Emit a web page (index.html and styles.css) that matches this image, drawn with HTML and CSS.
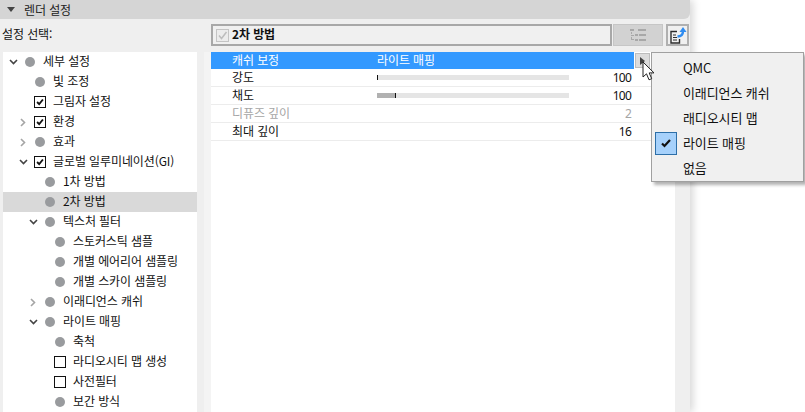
FILE: index.html
```html
<!DOCTYPE html>
<html lang="ko">
<head>
<meta charset="utf-8">
<title>렌더 설정</title>
<link rel="stylesheet" href="styles.css">
</head>
<body>
<div class="panel">
  <header class="head"><span class="tri"></span><span class="head-text">렌더 설정</span></header>
  <div class="toolbar">
    <div class="pick-label">설정 선택:</div>
    <div class="field">
      <span class="check-dis"><svg width="11" height="11" viewBox="0 0 11 11"><path d="M2 5.500l2.500 3L9.500 2" fill="none" stroke="#bdbdbd" stroke-width="1.500"/></svg></span>
      <b>2차 방법</b>
    </div>
    <div class="btn-list">
      <svg width="16" height="12" viewBox="0 0 16 12"><g fill="#a8a8a8"><rect x="0" y="0" width="4" height="2"/><rect x="5" y="5" width="3" height="2"/><rect x="5" y="10" width="3" height="2"/><rect x="8" y="0" width="8" height="2"/><rect x="9" y="5" width="7" height="2"/><rect x="9" y="10" width="7" height="2"/><rect x="1" y="3" width="1" height="2"/><rect x="1" y="6" width="3" height="1"/><rect x="1" y="8" width="1" height="3"/><rect x="2" y="10" width="2" height="1"/></g></svg>
    </div>
    <div class="btn-export">
      <svg width="18" height="18" viewBox="0 0 18 18"><path d="M8 5.500H2V17h8.500v-4" fill="none" stroke="#2b2b2b" stroke-width="1.400"/><path d="M4 9h3M4 11.500h4M4 14h4" stroke="#2b2b2b" stroke-width="1.200"/><path d="M8.500 10.500c3.500 0 5.500-1.500 5.500-5.500" fill="none" stroke="#2f8cf0" stroke-width="2.400"/><path d="M10.500 6l3.500-5 3.500 5z" fill="#2f8cf0"/></svg>
    </div>
  </div>
  <div class="main">
    <ul class="tree">
      <li class="row"><span class="arrow"><svg class="chev" viewBox="0 0 9 6"><path d="M1 1l3.500 3.500L8 1"/></svg></span><span class="dot"></span><span class="t">세부 설정</span></li>
      <li class="row d1"><span class="arrow"></span><span class="dot"></span><span class="t">빛 조정</span></li>
      <li class="row d1"><span class="arrow"></span><span class="box on"><svg viewBox="0 0 12 12"><path d="M2.500 6l2.500 2.500 4.500-5.500"/></svg></span><span class="t">그림자 설정</span></li>
      <li class="row d1"><span class="arrow"><svg class="side" viewBox="0 0 6 9"><path d="M1 1l3.500 3.500L1 8"/></svg></span><span class="box on"><svg viewBox="0 0 12 12"><path d="M2.500 6l2.500 2.500 4.500-5.500"/></svg></span><span class="t">환경</span></li>
      <li class="row d1"><span class="arrow"><svg class="side" viewBox="0 0 6 9"><path d="M1 1l3.500 3.500L1 8"/></svg></span><span class="dot"></span><span class="t">효과</span></li>
      <li class="row d1"><span class="arrow"><svg class="chev" viewBox="0 0 9 6"><path d="M1 1l3.500 3.500L8 1"/></svg></span><span class="box on"><svg viewBox="0 0 12 12"><path d="M2.500 6l2.500 2.500 4.500-5.500"/></svg></span><span class="t">글로벌 일루미네이션(GI)</span></li>
      <li class="row d2"><span class="arrow"></span><span class="dot"></span><span class="t">1차 방법</span></li>
      <li class="row d2 sel"><span class="arrow"></span><span class="dot"></span><span class="t">2차 방법</span></li>
      <li class="row d2"><span class="arrow"><svg class="chev" viewBox="0 0 9 6"><path d="M1 1l3.500 3.500L8 1"/></svg></span><span class="dot"></span><span class="t">텍스처 필터</span></li>
      <li class="row d3"><span class="arrow"></span><span class="dot"></span><span class="t">스토커스틱 샘플</span></li>
      <li class="row d3"><span class="arrow"></span><span class="dot"></span><span class="t">개별 에어리어 샘플링</span></li>
      <li class="row d3"><span class="arrow"></span><span class="dot"></span><span class="t">개별 스카이 샘플링</span></li>
      <li class="row d2"><span class="arrow"><svg class="side" viewBox="0 0 6 9"><path d="M1 1l3.500 3.500L1 8"/></svg></span><span class="dot"></span><span class="t">이래디언스 캐쉬</span></li>
      <li class="row d2"><span class="arrow"><svg class="chev" viewBox="0 0 9 6"><path d="M1 1l3.500 3.500L8 1"/></svg></span><span class="dot"></span><span class="t">라이트 매핑</span></li>
      <li class="row d3"><span class="arrow"></span><span class="dot"></span><span class="t">축척</span></li>
      <li class="row d3"><span class="arrow"></span><span class="box"></span><span class="t">라디오시티 맵 생성</span></li>
      <li class="row d3"><span class="arrow"></span><span class="box"></span><span class="t">사전필터</span></li>
      <li class="row d3"><span class="arrow"></span><span class="dot"></span><span class="t">보간 방식</span></li>
    </ul>
    <div class="gutter"></div>
    <div class="table">
      <div class="tr head-row"><span class="name">캐쉬 보정</span><span class="val">라이트 매핑</span><span class="more"><span class="more-tri"></span></span></div>
      <div class="tr"><span class="name">강도</span><span class="slider"><i class="tick"></i></span><span class="num">100</span></div>
      <div class="tr"><span class="name">채도</span><span class="slider"><i class="fill"></i><i class="tick"></i></span><span class="num">100</span></div>
      <div class="tr off"><span class="name">디퓨즈 깊이</span><span class="slider none"></span><span class="num">2</span></div>
      <div class="tr"><span class="name">최대 깊이</span><span class="slider none"></span><span class="num">16</span></div>
    </div>
  </div>
</div>
<ul class="menu">
  <li>QMC</li>
  <li>이래디언스 캐쉬</li>
  <li>래디오시티 맵</li>
  <li class="checked"><span class="mark"><svg width="10" height="9" viewBox="0 0 10 9"><path d="M1 4.500l2.500 2.500L9 1" fill="none" stroke="#111" stroke-width="2.200"/></svg></span>라이트 매핑</li>
  <li>없음</li>
</ul>
<svg class="cursor" width="14" height="20" viewBox="0 0 14 20"><path d="M1 1v15l3.500-3.200 2.500 6 2.700-1.100-2.500-5.800H12z" fill="#fff" stroke="#222" stroke-width="1"/></svg>
</body>
</html>
```
FILE: styles.css
```css
* { box-sizing: border-box; }
html, body { margin: 0; padding: 0; height: 412px; overflow: hidden; background: #fff; }
body {
  position: relative;
  font-family: "Noto Sans CJK KR", "Noto Sans", sans-serif;
  font-size: 12px;
  color: #111;
  letter-spacing: -0.1px;
}
.panel {
  width: 690px;
  height: 412px;
  background: #efefef;
  box-shadow: 3px 0 8px rgba(0,0,0,.16);
  display: flex;
  flex-direction: column;
  overflow: hidden;
}
.head {
  height: 19px;
  background: #d5d5d5;
  border-bottom-right-radius: 6px;
  display: flex;
  align-items: center;
  padding-left: 7px;
  flex: none;
}
.tri {
  width: 0; height: 0;
  border-left: 4px solid transparent;
  border-right: 4px solid transparent;
  border-top: 5px solid #444;
  margin-right: 9px;
}
.head-text { line-height: 17px; color: #222; }
.toolbar {
  display: flex;
  height: 22px;
  margin-top: 5px;
  flex: none;
}
.pick-label { width: 211px; padding-left: 2px; line-height: 20px; }
.field {
  width: 401px;
  border: 2px solid #a8a8a8;
  background: #f0f0f0;
  display: flex;
  align-items: center;
  padding-left: 3px;
}
.field b { font-weight: 700; margin-left: 3px; margin-bottom: 2px; line-height: 16px; }
.check-dis {
  width: 13px; height: 13px;
  border: 1px solid #c4c4c4;
  background: #ececec;
  display: flex;
}
.btn-list {
  width: 50px;
  margin-left: 1px;
  background: #d2d2d2;
  border: 1px solid #c6c6c6;
  display: flex;
  align-items: center;
  justify-content: center;
}
.btn-export {
  width: 23px;
  margin-left: 3px;
  border: 2px solid #b0b0b0;
  background: #f0f0f0;
  display: flex;
  align-items: center;
  justify-content: center;
}
.main {
  display: flex;
  flex: 1;
  margin-top: 6px;
  min-height: 0;
}
.tree {
  list-style: none;
  margin: 0 0 0 3px;
  padding: 0;
  width: 194px;
  background: #fff;
  flex: none;
}
.row { height: 20px; display: flex; align-items: center; padding-left: 0; }
.d1 { padding-left: 10px; }
.d2 { padding-left: 20px; }
.d3 { padding-left: 30px; }
.sel { background: #d9d9d9; }
.arrow { width: 20px; height: 12px; display: flex; align-items: center; justify-content: center; flex: none; }
.chev { width: 9px; height: 6px; fill: none; stroke: #444; stroke-width: 1.6; }
.side { width: 6px; height: 9px; fill: none; stroke: #a5a5a5; stroke-width: 1.6; }
.dot { width: 10px; height: 10px; border-radius: 50%; background: #999b9e; margin: 0 8px 0 2px; flex: none; }
.box {
  width: 12px; height: 12px;
  border: 1px solid #111;
  background: #fff;
  margin: 0 7px 0 1px;
  flex: none;
  display: flex;
}
.box svg { width: 10px; height: 10px; fill: none; stroke: #111; stroke-width: 2.2; }
.t { white-space: nowrap; line-height: 16px; margin-bottom: 2px; }
.gutter { width: 14px; flex: none; background: linear-gradient(90deg, #efefef 50%, #f4f4f4 50%); }
.table { width: 464px; background: #fff; flex: none; }
.tr {
  height: 18px;
  display: flex;
  align-items: center;
  border-bottom: 1px solid #ececec;
  position: relative;
  white-space: nowrap;
}
.name { width: 166px; padding-left: 21px; flex: none; margin-bottom: 2px; }
.head-row { height: 17px; border-bottom: 0; color: #fff; width: 423px; background: #3399ff; }
.val { margin-bottom: 2px; }
.more {
  position: absolute;
  left: 424px; top: 1px;
  width: 15px; height: 15px;
  background: #dcdcdc;
  border: 1px solid #bdbdbd;
  display: flex;
  align-items: center;
  padding-left: 4px;
}
.more-tri { width: 0; height: 0; border-left: 5px solid #444; border-top: 4px solid transparent; border-bottom: 4px solid transparent; }
.slider { width: 192px; height: 5px; background: #e5e5e5; flex: none; display: flex; }
.slider.none { background: none; }
.fill { width: 18px; background: #b1b1b1; }
.tick { width: 1px; background: #111; }
.num { width: 63px; text-align: right; font-family: "Noto Sans", sans-serif; letter-spacing: -0.8px; padding-right: 1px; }
.off { color: #a5a5a5; }
.menu {
  position: absolute;
  left: 651px; top: 52px;
  width: 153px; height: 130px;
  margin: 0;
  padding: 3px 0 0;
  list-style: none;
  background: #f0f0f0;
  border: 1px solid #a0a0a0;
  box-shadow: 3px 3px 3px rgba(0,0,0,.3);
}
.menu li {
  height: 25px;
  line-height: 23px;
  padding-left: 31px;
  position: relative;
  font-size: 13px;
}
.mark {
  position: absolute;
  left: 3px; top: 1px;
  width: 22px; height: 23px;
  background: #a6d1fb;
  border: 1px solid #2d6fa8;
  display: flex;
  align-items: center;
  justify-content: center;
}
.cursor { position: absolute; left: 642px; top: 61px; }
```
